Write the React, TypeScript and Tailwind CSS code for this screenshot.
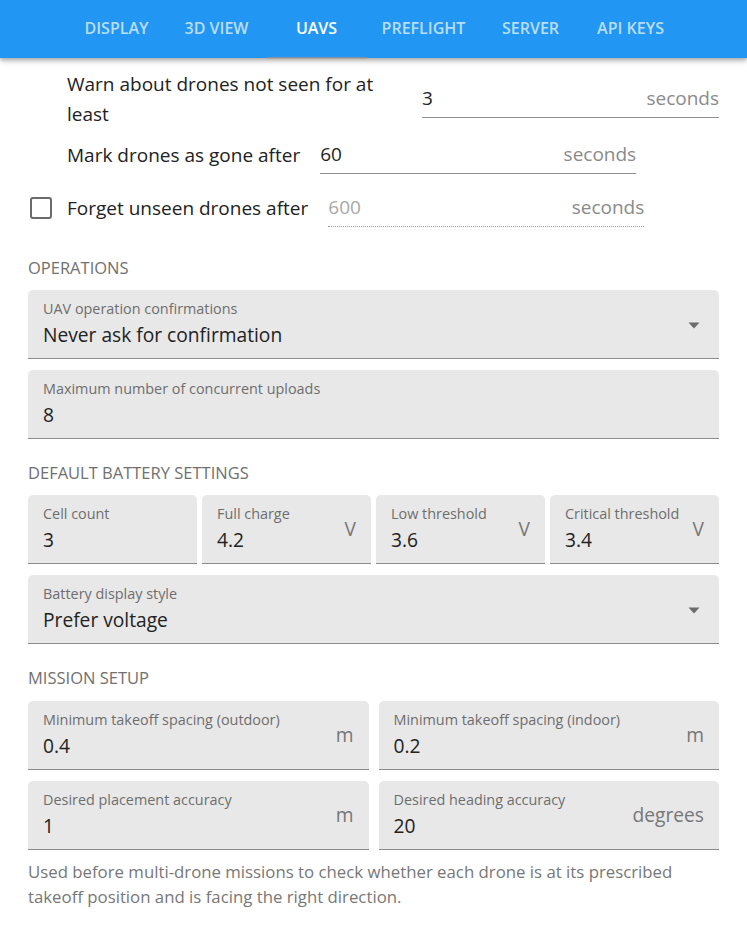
import React from "react";

const FONT = { fontFamily: '"Open Sans", "Noto Sans", Arial, sans-serif' };

function Tab({ label, active, wide }: { label: string; active?: boolean; wide?: boolean }) {
  return (
    <div
      className={`relative flex h-full items-center justify-center px-[15px] pb-[3px] ${wide ? "w-[114px]" : "w-[100px]"} text-[16px] font-semibold uppercase tracking-[0px] ${
        active ? "text-white" : "text-white/70"
      }`}
    >
      <span className="leading-none">{label}</span>
      {active && <div className="absolute bottom-[-1px] left-0 right-0 h-[2px] bg-[#b9937b]/60" />}
    </div>
  );
}

function Underlined({
  value,
  unit,
  disabled,
  className = "",
}: {
  value: string;
  unit: string;
  disabled?: boolean;
  className?: string;
}) {
  return (
    <div
      className={`flex h-[38px] items-center ${
        disabled ? "border-b border-dotted border-[#9e9e9e]" : "border-b border-[#8f8f8f]"
      } ${className}`}
    >
      <span className={`flex-1 text-[19px] ${disabled ? "text-[#a8a8a8]" : "text-[#222]"}`}>{value}</span>
      <span className="text-[19px] text-[#8a8a8a]">{unit}</span>
    </div>
  );
}

function Filled({
  label,
  value,
  unit,
  select,
}: {
  label: string;
  value: string;
  unit?: string;
  select?: boolean;
}) {
  return (
    <div className="flex h-[69px] items-center rounded-t-[5px] border-b border-[#8c8c8c] bg-[#e8e8e8] pl-[15px] pr-[15px]">
      <div className="flex h-full min-w-0 flex-1 flex-col pt-[9px]">
        <div className="truncate text-[14.4px] leading-[20px] text-[#6e6e6e]">{label}</div>
        <div className="mt-[2px] text-[19.2px] leading-[28px] text-[#222]">{value}</div>
      </div>
      {unit && <div className="ml-[4px] text-[19.2px] text-[#777]">{unit}</div>}
      {select && (
        <svg width="12" height="7" viewBox="0 0 12 7" className="mr-[4px] mt-[2px]">
          <path d="M0.5 0.5 L11.5 0.5 L6 6.5 Z" fill="#6b6b6b" />
        </svg>
      )}
    </div>
  );
}

function Heading({ children, className = "" }: { children: React.ReactNode; className?: string }) {
  return (
    <div className={`text-[16.5px] font-medium uppercase leading-[24px] text-[#707070] ${className}`}>
      {children}
    </div>
  );
}

export default function App() {
  return (
    <div className="min-h-[939px] w-[747px] bg-white" style={FONT}>
      <div className="relative z-10 flex h-[58px] justify-center bg-[#2196f3] shadow-[0_2px_4px_rgba(0,0,0,0.25),0_4px_6px_rgba(0,0,0,0.12)]">
        <Tab label="Display" />
        <Tab label="3D View" />
        <Tab label="UAVs" active />
        <Tab label="Preflight" wide />
        <Tab label="Server" />
        <Tab label="API Keys" />
      </div>

      <div className="px-[28px]">
        <div className="mt-[11px] flex h-[60px] items-center pl-[39px]">
          <div className="w-[335px] text-[19px] leading-[30px] text-[#222]">
            Warn about drones not seen for at least
          </div>
          <Underlined value="3" unit="seconds" className="ml-[20px] flex-1" />
        </div>

        <div className="mt-[7px] flex h-[38px] items-center pl-[39px]">
          <div className="text-[19px] leading-[30px] text-[#222]">Mark drones as gone after</div>
          <Underlined value="60" unit="seconds" className="ml-[20px] w-[316px]" />
        </div>

        <div className="mt-[12px] flex h-[44px] items-center">
          <div className="flex w-[39px] items-center pl-[2px]">
            <div className="h-[22px] w-[22px] rounded-[3px] border-[2.5px] border-[#6b6b6b]" />
          </div>
          <div className="text-[19px] leading-[30px] text-[#222]">Forget unseen drones after</div>
          <Underlined value="600" unit="seconds" disabled className="ml-[20px] w-[316px]" />
        </div>

        <Heading className="mt-[26px]">Operations</Heading>
        <div className="mt-[10px] flex flex-col gap-[11px]">
          <Filled label="UAV operation confirmations" value="Never ask for confirmation" select />
          <Filled label="Maximum number of concurrent uploads" value="8" />
        </div>

        <Heading className="mt-[22px]">Default battery settings</Heading>
        <div className="mt-[10px] grid grid-cols-4 gap-[5px]">
          <Filled label="Cell count" value="3" />
          <Filled label="Full charge" value="4.2" unit="V" />
          <Filled label="Low threshold" value="3.6" unit="V" />
          <Filled label="Critical threshold" value="3.4" unit="V" />
        </div>
        <div className="mt-[11px]">
          <Filled label="Battery display style" value="Prefer voltage" select />
        </div>

        <Heading className="mt-[22px]">Mission setup</Heading>
        <div className="mt-[11px] grid grid-cols-2 gap-x-[10px] gap-y-[11px]">
          <Filled label="Minimum takeoff spacing (outdoor)" value="0.4" unit="m" />
          <Filled label="Minimum takeoff spacing (indoor)" value="0.2" unit="m" />
          <Filled label="Desired placement accuracy" value="1" unit="m" />
          <Filled label="Desired heading accuracy" value="20" unit="degrees" />
        </div>
        <div className="mt-[9px] text-[16.8px] leading-[25px] text-[#777]">
          Used before multi-drone missions to check whether each drone is at its prescribed takeoff
          position and is facing the right direction.
        </div>
      </div>
    </div>
  );
}
